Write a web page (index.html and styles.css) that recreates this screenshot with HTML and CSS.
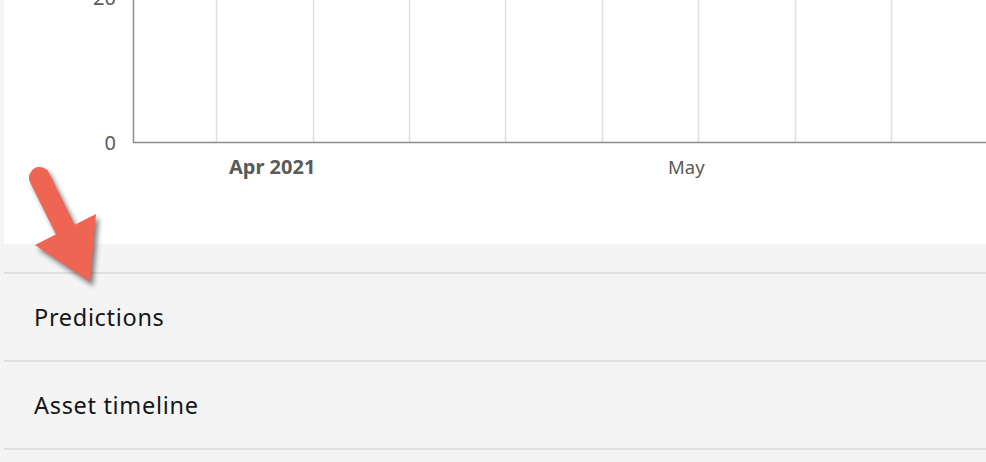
FILE: index.html
```html
<!DOCTYPE html>
<html lang="en">
<head>
<meta charset="utf-8">
<title>Asset chart</title>
<link rel="stylesheet" href="styles.css">
</head>
<body>
<div class="page">
  <section class="card">
    <svg class="chart" width="982" height="244" viewBox="4 0 982 244" xmlns="http://www.w3.org/2000/svg">
      <g class="grid">
        <line x1="216.5" y1="0" x2="216.5" y2="142"/>
        <line x1="313.5" y1="0" x2="313.5" y2="142"/>
        <line x1="409.5" y1="0" x2="409.5" y2="142"/>
        <line x1="505.5" y1="0" x2="505.5" y2="142"/>
        <line x1="602.5" y1="0" x2="602.5" y2="142"/>
        <line x1="698.5" y1="0" x2="698.5" y2="142"/>
        <line x1="795.5" y1="0" x2="795.5" y2="142"/>
        <line x1="891.5" y1="0" x2="891.5" y2="142"/>
      </g>
      <line class="axis" x1="133.5" y1="0" x2="133.5" y2="143"/>
      <line class="axis" x1="133" y1="142.5" x2="986" y2="142.5"/>
      <text class="tick tick-y" x="116" y="5">20</text>
      <text class="tick tick-y" x="116" y="150">0</text>
      <text class="tick tick-bold" x="229" y="174">Apr 2021</text>
      <text class="tick" x="668" y="174">May</text>
    </svg>
  </section>
  <ul class="accordion">
    <li class="accordion-item">Predictions</li>
    <li class="accordion-item">Asset timeline</li>
  </ul>
  <svg class="callout" width="110" height="140" viewBox="0 160 110 140" xmlns="http://www.w3.org/2000/svg">
    <g class="callout-shape">
      <line x1="39.5" y1="177.5" x2="67" y2="233" stroke-width="21" stroke-linecap="round"/>
      <polygon points="35,245 96,214 90,282"/>
    </g>
  </svg>
</div>
</body>
</html>
```
FILE: styles.css
```css
html, body {
  margin: 0;
  padding: 0;
}
body {
  background: #f4f4f4;
  font-family: "Noto Sans", "Open Sans", sans-serif;
  overflow: hidden;
}
.page {
  position: relative;
  padding-left: 4px;
  height: 462px;
}
.card {
  background: #ffffff;
  height: 244px;
}
.chart {
  display: block;
}
.grid line {
  stroke: #e0e0e0;
  stroke-width: 1.5;
}
.axis {
  stroke: #8d8d8d;
  stroke-width: 1.5;
}
.tick {
  font-family: "Noto Sans", "Open Sans", sans-serif;
  font-size: 18.5px;
  fill: #5a5a5a;
}
.tick-y {
  text-anchor: end;
  font-size: 20px;
}
.tick-bold {
  font-weight: 700;
  font-size: 20px;
}
.accordion {
  list-style: none;
  margin: 28px 0 0 0;
  padding: 0;
}
.accordion-item {
  display: flex;
  align-items: center;
  height: 86px;
  border-top: 2px solid #e0e0e0;
  padding-left: 30px;
  font-size: 23.5px;
  color: #161616;
  letter-spacing: 0.68px;
}
.accordion-item:last-child {
  border-bottom: 2px solid #e0e0e0;
}
.callout {
  position: absolute;
  left: 0;
  top: 160px;
  overflow: visible;
  filter: drop-shadow(3px 4px 2.5px rgba(0, 0, 0, 0.5));
}
.callout-shape line {
  stroke: #ee6554;
}
.callout-shape polygon {
  fill: #ee6554;
}
```
